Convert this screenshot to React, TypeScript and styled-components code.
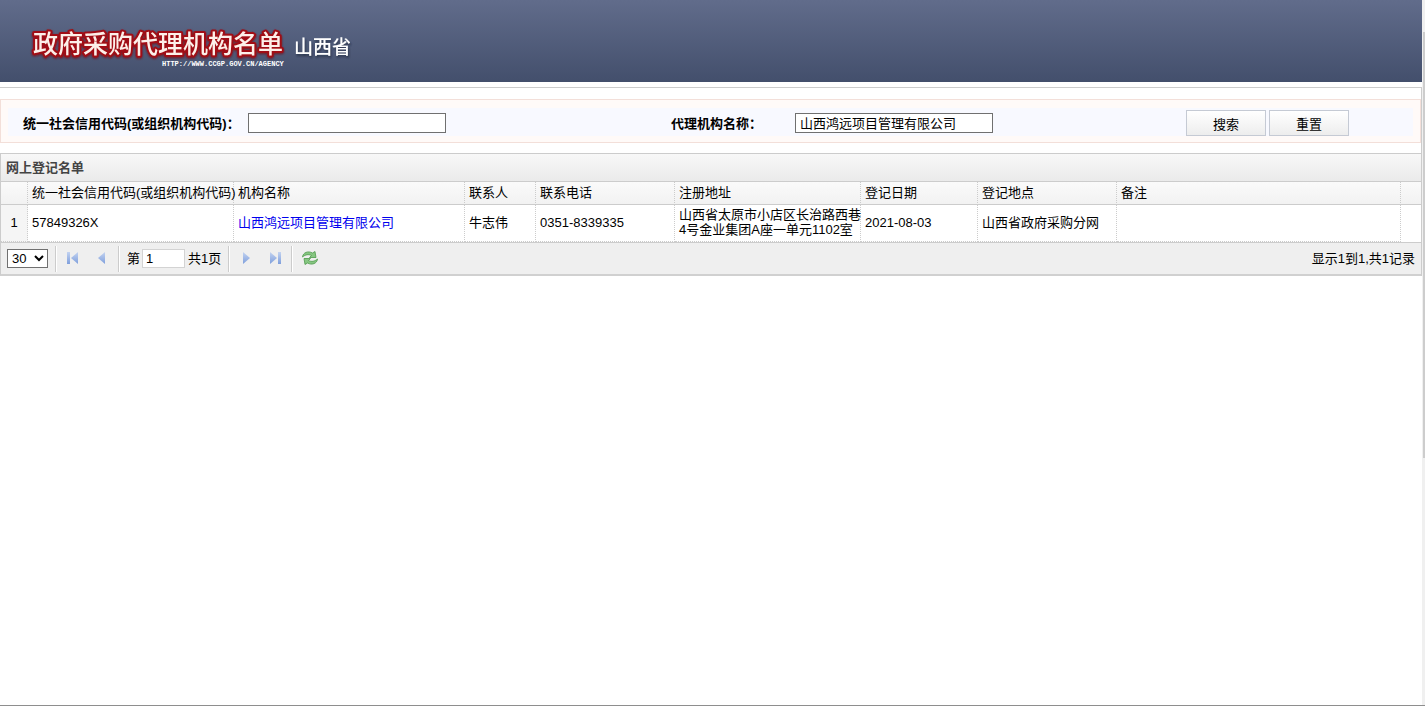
import React from "react";
import styled, { createGlobalStyle } from "styled-components";

const Global = createGlobalStyle`
  * { box-sizing: border-box; }
  body { margin: 0; background: #fff; }
  body, input, select, button {
    font-family: "Liberation Sans", "Noto Sans CJK SC", sans-serif;
    font-size: 13px;
    color: #000;
  }
`;

const Window = styled.div`
  display: flex;
  min-height: 100vh;
  flex-direction: column;
`;
const Body = styled.div`
  display: flex;
  flex: 1;
  border-bottom: 1px solid #8e8e8e;
  margin-bottom: 2px;
`;
const Page = styled.div`
  flex: 1;
  min-width: 0;
`;
const ScrollTrack = styled.div`
  width: 3px;
  padding: 32px 0 0 1px;
  background: #f0f0f0;
`;
const ScrollThumb = styled.div`
  height: 426px;
  background: #cdcdcd;
`;

const Banner = styled.header`
  display: flex;
  align-items: flex-start;
  height: 82px;
  padding: 16px 0 0 29px;
  background: linear-gradient(#616c8b, #434f6c);
`;

const Content = styled.main`
  margin-top: 5px;
  border-top: 1px solid #ccc;
  border-right: 1px solid #ccc;
  padding-top: 11px;
`;
const Search = styled.form`
  display: grid;
  grid-template-columns: 240px 423px 124px 391px 1fr;
  align-items: center;
  height: 44px;
  padding: 8px 7px 6px;
  border: 1px solid #f3dfd9;
  background: #fffaf8;
`;
const Label = styled.label`
  display: flex;
  align-items: center;
  height: 28px;
  padding-left: 15px;
  background: #f8f9ff;
  font-weight: bold;
  white-space: nowrap;
`;
const NameLabel = styled(Label)`
  padding-left: 0;
`;
const Controls = styled.div`
  display: flex;
  align-items: center;
  gap: 3px;
  height: 28px;
  padding-top: 2px;
  background: #f8f9ff;
`;
const TextBox = styled.input`
  width: 198px;
  height: 20px;
  padding: 0 4px 2px;
  border: 1px solid #707070;
  border-radius: 0;
  background: #fff;
`;
const Button = styled.button`
  width: 80px;
  height: 26px;
  padding: 0;
  border: 1px solid #c5cad4;
  background: linear-gradient(#fff, #ededed);
`;

const Grid = styled.section`
  margin-top: 10px;
  border: 1px solid #ccc;
  border-right: 0;
  border-bottom: 2px solid #d0d0d0;
`;
const Title = styled.h2`
  height: 28px;
  margin: 0;
  padding-left: 5px;
  border-bottom: 1px solid #ccc;
  background: linear-gradient(#f8f8f8, #eaeaea);
  color: #444;
  font-size: 13px;
  line-height: 28px;
`;
const Table = styled.table`
  width: 100%;
  border-collapse: separate;
  border-spacing: 0;
  table-layout: fixed;
`;
const Head = styled.th`
  height: 23px;
  padding: 0 0 2px 4px;
  border-right: 1px dotted #ccc;
  border-bottom: 1px solid #ccc;
  background: linear-gradient(#fafafa, #f2f2f2);
  font-weight: normal;
  line-height: 15px;
  text-align: left;
  white-space: nowrap;
  &:last-child { border-right: 0; }
`;
const Cell = styled.td`
  height: 37px;
  padding: 0 0 2px 4px;
  border-right: 1px dotted #ccc;
  border-bottom: 1px dotted #ccc;
  line-height: 15px;
  white-space: nowrap;
  &:last-child { border: 0; }
`;
const NumberCell = styled(Cell)`
  padding: 0 0 2px;
  background: #f5f5f5;
  text-align: center;
`;
const Link = styled.a`
  color: #00e;
  text-decoration: none;
`;

const Pager = styled.div`
  display: flex;
  align-items: center;
  height: 32px;
  padding: 0 6px;
  border-top: 1px solid #ccc;
  background: #efefef;
`;
const PageSize = styled.select`
  width: 41px;
  height: 19px;
  margin-right: 7px;
  padding: 0;
  border: 1px solid #707070;
  border-radius: 0;
  background: #fff;
`;
const Divider = styled.span`
  width: 2px;
  height: 26px;
  border-left: 1px solid #ccc;
  border-right: 1px solid #fff;
`;
const Group = styled.div`
  display: flex;
  align-items: center;
  padding: 0 7px;
  & > label, & > span { padding-bottom: 2px; }
`;
const Nav = styled.nav`
  display: flex;
  gap: 13px;
  padding: 0 8px 2px;
`;
const IconButton = styled.button`
  display: flex;
  padding: 0;
  border: 0;
  background: none;
`;
const PageBox = styled.input`
  width: 43px;
  height: 19px;
  margin: 0 3px 0 2px;
  padding: 0 3px;
  border: 1px solid #d3d3d3;
  background: #fff;
`;
const Summary = styled.span`
  margin-left: auto;
  padding-bottom: 2px;
`;

function Logo() {
  return (
    <svg width="350" height="64" viewBox="0 0 350 64" role="img" aria-label="政府采购代理机构名单 山西省">
      <defs>
        <filter id="glow" x="-5%" y="-20%" width="110%" height="150%">
          <feDropShadow dx="0" dy="1" stdDeviation="1" floodColor="#7a0d14" floodOpacity="0.9" />
        </filter>
        <filter id="shade" x="-10%" y="-20%" width="120%" height="150%">
          <feDropShadow dx="1" dy="2" stdDeviation="1" floodColor="#1c2438" floodOpacity="0.7" />
        </filter>
      </defs>
      <text x="4" y="37" fontFamily="'Noto Sans CJK SC', sans-serif" fontSize="25" fontWeight="500" fill="#fdf0ea" stroke="#a00e14" strokeWidth="4" strokeLinejoin="round" paintOrder="stroke" filter="url(#glow)">
        政府采购代理机构名单
      </text>
      <text x="265" y="38" fontFamily="'Noto Sans CJK SC', sans-serif" fontSize="19" fontWeight="500" fill="#fff" filter="url(#shade)">
        山西省
      </text>
      <text x="133" y="50" fontFamily="'Liberation Mono', monospace" fontSize="7" fontWeight="bold" fill="#fff">
        HTTP://WWW.CCGP.GOV.CN/AGENCY
      </text>
    </svg>
  );
}

function Arrow({ back, end }: { back?: boolean; end?: boolean }) {
  return (
    <svg width="16" height="16" viewBox="0 0 16 16" aria-hidden="true">
      <defs>
        <linearGradient id="arrow" x1="0" y1="0" x2="0" y2="1">
          <stop offset="0" stopColor="#c3d3f1" />
          <stop offset="1" stopColor="#7f9fdc" />
        </linearGradient>
      </defs>
      <g transform={back ? "translate(16 0) scale(-1 1)" : undefined}>
        <path d={end ? "M3 2 L10 8 L3 14Z" : "M5 2 L12 8 L5 14Z"} fill="url(#arrow)" />
        {end && <rect x="11" y="2" width="3" height="12" fill="url(#arrow)" />}
      </g>
    </svg>
  );
}

function Refresh() {
  const swoop = "M0.5 7 C1 2.5 6 0.500 10.500 3 L13 1.500 L14 7.500 L7.500 7.500 L9.500 5.500 C6.500 4 3.500 4.500 0.500 7Z";
  return (
    <svg width="18" height="16" viewBox="-1 0 18 16" aria-hidden="true">
      <g fill="#86c681" stroke="#4f9a4d" strokeWidth="0.8" strokeLinejoin="round">
        <path d={swoop} />
        <path d={swoop} transform="rotate(180 8 8)" />
      </g>
    </svg>
  );
}

const columns = [
  { title: "", width: 27 },
  { title: "统一社会信用代码(或组织机构代码)", width: 206 },
  { title: "机构名称", width: 231 },
  { title: "联系人", width: 71 },
  { title: "联系电话", width: 139 },
  { title: "注册地址", width: 186 },
  { title: "登记日期", width: 117 },
  { title: "登记地点", width: 139 },
  { title: "备注" },
  { title: "", width: 20 },
];

export default function App() {
  return (
    <>
      <Global />
      <Window>
        <Body>
          <Page>
            <Banner><Logo /></Banner>
            <Content>
              <Search onSubmit={(e) => e.preventDefault()}>
                <Label htmlFor="code">统一社会信用代码(或组织机构代码)：</Label>
                <Controls><TextBox id="code" /></Controls>
                <NameLabel htmlFor="name">代理机构名称：</NameLabel>
                <Controls><TextBox id="name" defaultValue="山西鸿远项目管理有限公司" /></Controls>
                <Controls>
                  <Button type="submit">搜索</Button>
                  <Button type="reset">重置</Button>
                </Controls>
              </Search>
              <Grid>
                <Title>网上登记名单</Title>
                <Table>
                  <colgroup>
                    {columns.map((c, i) => <col key={i} width={c.width} />)}
                  </colgroup>
                  <thead>
                    <tr>{columns.map((c, i) => <Head key={i}>{c.title}</Head>)}</tr>
                  </thead>
                  <tbody>
                    <tr>
                      <NumberCell>1</NumberCell>
                      <Cell>57849326X</Cell>
                      <Cell><Link href="#agency">山西鸿远项目管理有限公司</Link></Cell>
                      <Cell>牛志伟</Cell>
                      <Cell>0351-8339335</Cell>
                      <Cell>山西省太原市小店区长治路西巷<br />4号金业集团A座一单元1102室</Cell>
                      <Cell>2021-08-03</Cell>
                      <Cell>山西省政府采购分网</Cell>
                      <Cell />
                      <Cell />
                    </tr>
                  </tbody>
                </Table>
                <Pager>
                  <PageSize aria-label="每页记录数" defaultValue="30">
                    <option>30</option>
                  </PageSize>
                  <Divider />
                  <Nav>
                    <IconButton aria-label="首页"><Arrow back end /></IconButton>
                    <IconButton aria-label="上一页"><Arrow back /></IconButton>
                  </Nav>
                  <Divider />
                  <Group>
                    <label htmlFor="page">第</label>
                    <PageBox id="page" defaultValue="1" />
                    <span>共1页</span>
                  </Group>
                  <Divider />
                  <Nav>
                    <IconButton aria-label="下一页"><Arrow /></IconButton>
                    <IconButton aria-label="末页"><Arrow end /></IconButton>
                  </Nav>
                  <Divider />
                  <Nav>
                    <IconButton aria-label="刷新"><Refresh /></IconButton>
                  </Nav>
                  <Summary>显示1到1,共1记录</Summary>
                </Pager>
              </Grid>
            </Content>
          </Page>
          <ScrollTrack><ScrollThumb /></ScrollTrack>
        </Body>
      </Window>
    </>
  );
}
